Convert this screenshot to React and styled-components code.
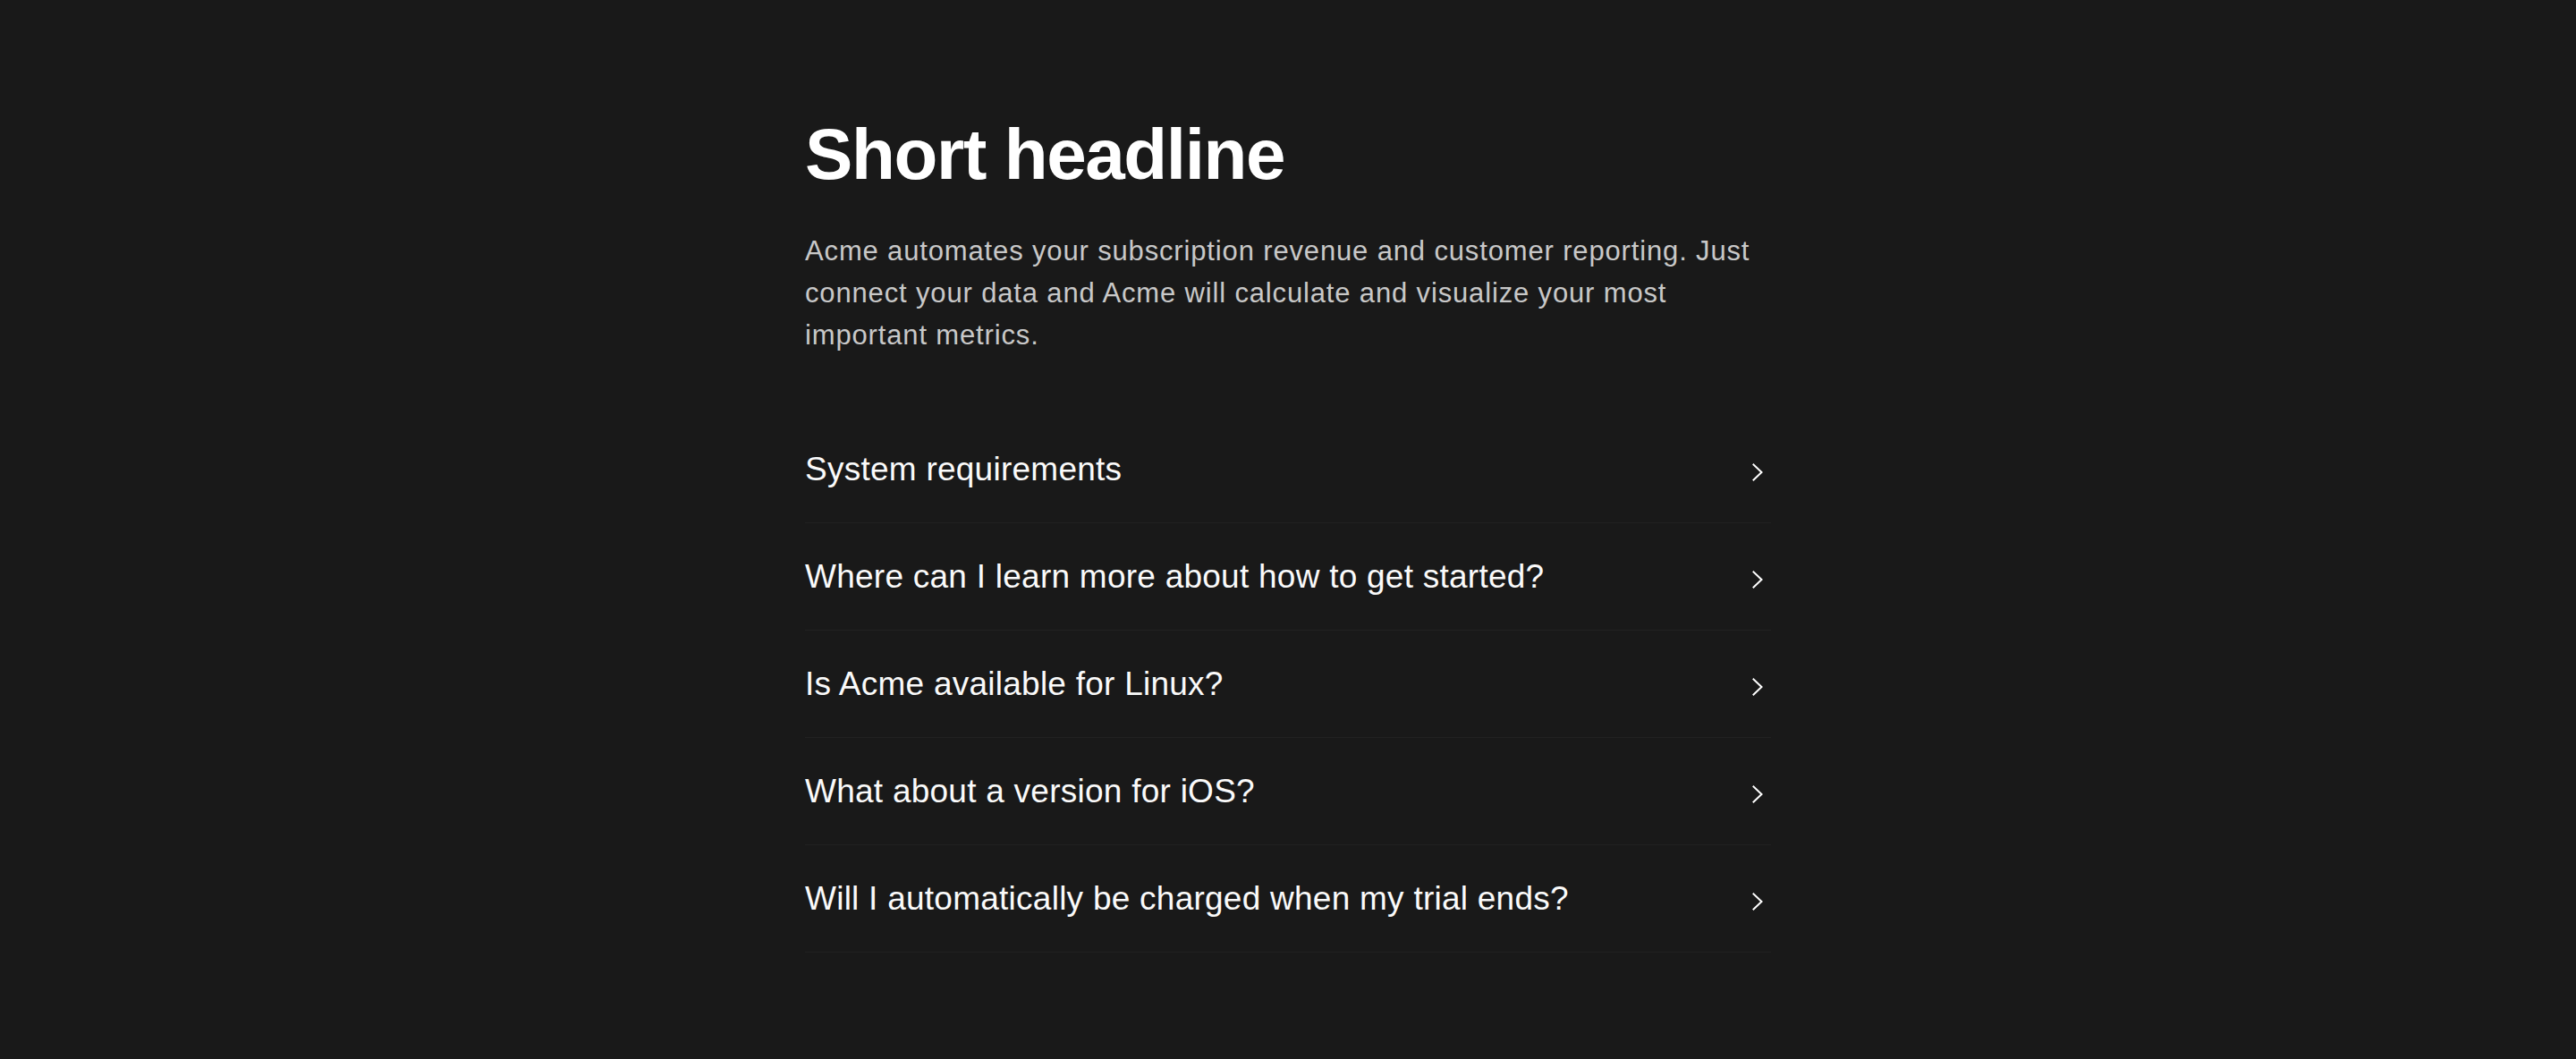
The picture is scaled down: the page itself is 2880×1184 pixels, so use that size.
import React from "react";
import styled, { createGlobalStyle } from "styled-components";

const GlobalStyle = createGlobalStyle`
  html, body {
    margin: 0;
    padding: 0;
    background: #191919;
  }
  body {
    font-family: "Liberation Sans", Arial, Helvetica, sans-serif;
    -webkit-font-smoothing: antialiased;
  }
`;

const Page = styled.main`
  min-height: 1184px;
  background: #191919;
  display: flex;
  justify-content: center;
  padding-top: 125px;
  box-sizing: border-box;
`;

const Container = styled.section`
  width: 1080px;
  display: flex;
  flex-direction: column;
`;

const Headline = styled.h1`
  margin: 0;
  font-size: 80px;
  line-height: 96px;
  font-weight: 700;
  letter-spacing: -1.4px;
  color: #ffffff;
`;

const Lead = styled.p`
  margin: 36px 0 0;
  font-size: 31px;
  line-height: 47px;
  letter-spacing: 0.85px;
  color: #c8c8c8;
`;

const List = styled.ul`
  list-style: none;
  margin: 67px 0 0;
  padding: 0;
`;

const Row = styled.li`
  display: flex;
  align-items: center;
  justify-content: space-between;
  padding: 32px 0;
  border-bottom: 1px solid rgba(255, 255, 255, 0.035);
`;

const Question = styled.span`
  font-size: 37px;
  line-height: 55px;
  letter-spacing: 0.25px;
  color: #fafafa;
`;

const Chevron = styled.svg`
  flex: none;
  width: 12px;
  height: 20px;
  margin-right: 9px;
  margin-top: 6px;
`;

const questions = [
  "System requirements",
  "Where can I learn more about how to get started?",
  "Is Acme available for Linux?",
  "What about a version for iOS?",
  "Will I automatically be charged when my trial ends?",
];

export default function App() {
  return (
    <>
      <GlobalStyle />
      <Page>
        <Container>
          <Headline>Short headline</Headline>
          <Lead>
            Acme automates your subscription revenue and customer reporting. Just
            connect your data and Acme will calculate and visualize your most
            important metrics.
          </Lead>
          <List>
            {questions.map((q) => (
              <Row key={q}>
                <Question>{q}</Question>
                <Chevron viewBox="0 0 12 20" fill="none">
                  <polyline
                    points="1.5,1.5 10.5,10 1.5,18.5"
                    stroke="#ffffff"
                    strokeWidth="2"
                    strokeLinecap="square"
                    strokeLinejoin="miter"
                  />
                </Chevron>
              </Row>
            ))}
          </List>
        </Container>
      </Page>
    </>
  );
}
